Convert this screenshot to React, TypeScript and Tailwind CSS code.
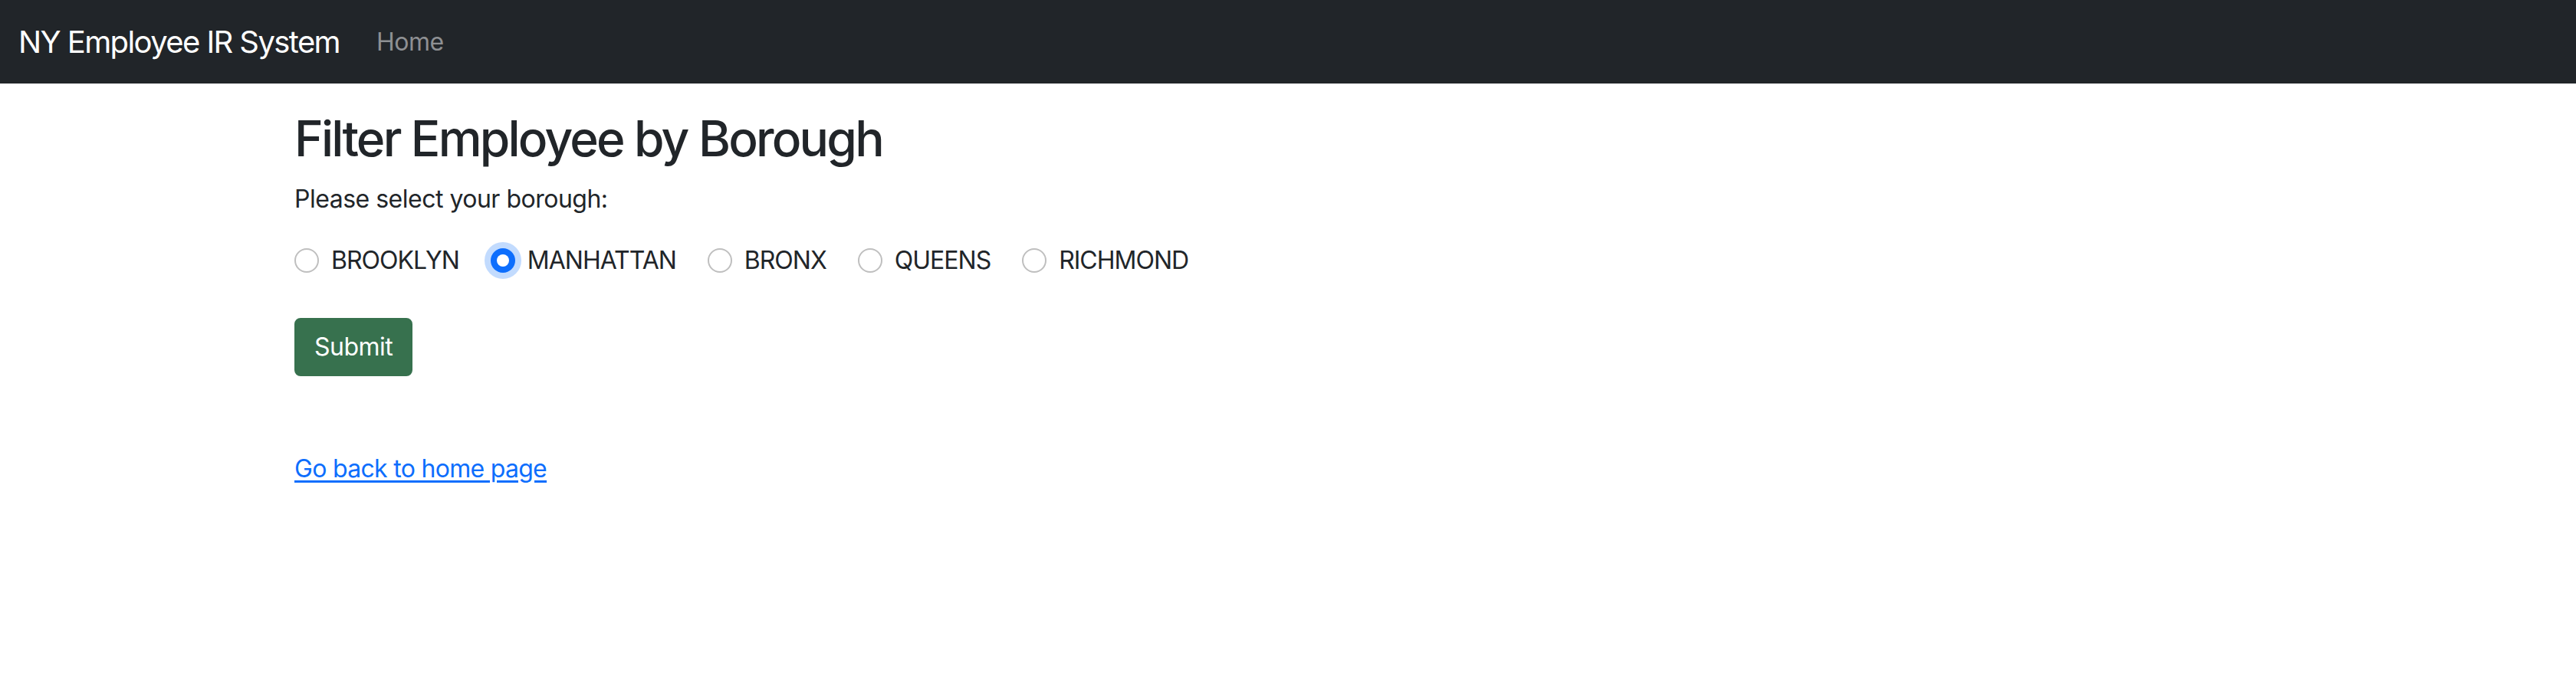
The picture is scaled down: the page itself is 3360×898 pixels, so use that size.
import { useState } from "react";

const boroughs = ["BROOKLYN", "MANHATTAN", "BRONX", "QUEENS", "RICHMOND"];

const Radio = ({ checked }: { checked: boolean }) => {
  if (checked) {
    return (
      <span className="mt-[8px] flex h-[32px] w-[32px] shrink-0 items-center justify-center rounded-full bg-[#0d6efd] shadow-[0_0_0_8px_rgba(13,110,253,0.25)]">
        <span className="h-[16px] w-[16px] rounded-full bg-white" />
      </span>
    );
  }
  return <span className="mt-[8px] h-[32px] w-[32px] shrink-0 rounded-full border-2 border-[#bfbfbf] bg-white" />;
};

const App = () => {
  const [selected, setSelected] = useState("MANHATTAN");

  return (
    <div className="min-h-[898px] bg-white font-['Inter','Liberation_Sans',sans-serif] text-[#212529]">
      <nav className="flex h-[109px] items-center bg-[#212529] px-[24px]">
        <a href="#" className="mr-[32px] text-[40px] leading-[60px] tracking-[-1.6px] text-white">
          NY Employee IR System
        </a>
        <a href="#" className="px-[16px] text-[32px] leading-[48px] tracking-[-0.5px] text-[#8e9093]">
          Home
        </a>
      </nav>

      <div className="mx-auto w-[2640px] px-[24px] pt-[34px]">
        <h2 className="mb-[16px] text-[64px] font-medium leading-[1.2] tracking-[-2.8px]">Filter Employee by Borough</h2>
        <p className="mb-[32px] text-[32px] leading-[48px] tracking-[-0.5px]">Please select your borough:</p>

        <form onSubmit={(e) => e.preventDefault()}>
          <div className="mb-[4px] flex h-[48px] gap-[41px]">
            {boroughs.map((b) => (
              <label
                key={b}
                className="flex cursor-pointer gap-[16px] text-[32px] leading-[48px] tracking-[-1px]"
                onClick={() => setSelected(b)}
              >
                <Radio checked={selected === b} />
                <span>{b}</span>
              </label>
            ))}
          </div>

          <button
            type="submit"
            className="mt-[47px] h-[76px] rounded-[8px] border-2 border-[#37714e] bg-[#37714e] px-[24px] text-[32px] leading-[48px] tracking-[-0.5px] text-white"
          >
            Submit
          </button>
        </form>

        <div className="mt-[97px] text-[32px] leading-[48px]">
          <a href="#" className="text-[#0d6efd] underline underline-offset-[4px] tracking-[-0.7px]">
            Go back to home page
          </a>
        </div>
      </div>
    </div>
  );
};

export default App;
